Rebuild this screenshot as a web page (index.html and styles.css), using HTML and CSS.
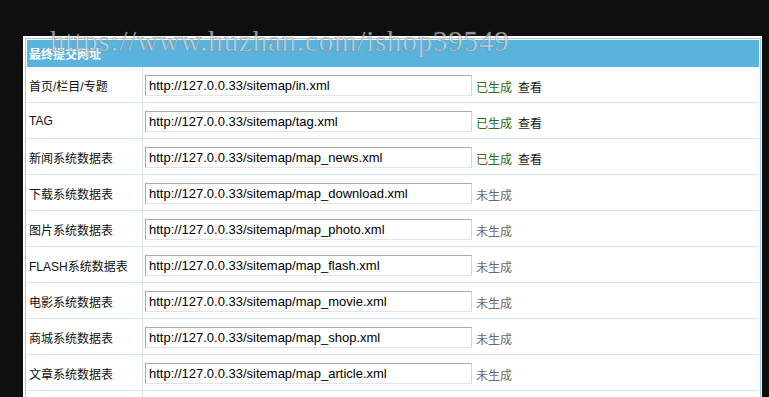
FILE: index.html
```html
<!DOCTYPE html>
<html lang="zh-CN">
<head>
    <meta charset="UTF-8">
    <title>Sitemap 提交网址</title>
    <link rel="stylesheet" href="styles.css">
</head>
<body>
    <div class="panel">
        <table class="sitemap">
            <tr>
                <th colspan="2">最终提交网址</th>
            </tr>
            <tr>
                <td class="label">首页/栏目/专题</td>
                <td><input type="text" value="http://127.0.0.33/sitemap/in.xml"><span class="done">已生成</span><a class="view" href="#">查看</a></td>
            </tr>
            <tr>
                <td class="label">TAG</td>
                <td><input type="text" value="http://127.0.0.33/sitemap/tag.xml"><span class="done">已生成</span><a class="view" href="#">查看</a></td>
            </tr>
            <tr>
                <td class="label">新闻系统数据表</td>
                <td><input type="text" value="http://127.0.0.33/sitemap/map_news.xml"><span class="done">已生成</span><a class="view" href="#">查看</a></td>
            </tr>
            <tr>
                <td class="label">下载系统数据表</td>
                <td><input type="text" value="http://127.0.0.33/sitemap/map_download.xml"><span class="todo">未生成</span></td>
            </tr>
            <tr>
                <td class="label">图片系统数据表</td>
                <td><input type="text" value="http://127.0.0.33/sitemap/map_photo.xml"><span class="todo">未生成</span></td>
            </tr>
            <tr>
                <td class="label">FLASH系统数据表</td>
                <td><input type="text" value="http://127.0.0.33/sitemap/map_flash.xml"><span class="todo">未生成</span></td>
            </tr>
            <tr>
                <td class="label">电影系统数据表</td>
                <td><input type="text" value="http://127.0.0.33/sitemap/map_movie.xml"><span class="todo">未生成</span></td>
            </tr>
            <tr>
                <td class="label">商城系统数据表</td>
                <td><input type="text" value="http://127.0.0.33/sitemap/map_shop.xml"><span class="todo">未生成</span></td>
            </tr>
            <tr>
                <td class="label">文章系统数据表</td>
                <td><input type="text" value="http://127.0.0.33/sitemap/map_article.xml"><span class="todo">未生成</span></td>
            </tr>
            <tr>
                <td class="label"></td>
                <td></td>
            </tr>
        </table>
    </div>

    <div class="watermark">https://www.huzhan.com/ishop39549</div>
</body>
</html>
```

FILE: styles.css
```css
:root {
    --head: #5ab3dd;
    --line: #d4e6ef;
    --frame: #9ccde6;
    --green: #2c6a1c;
}

body {
    margin: 0;
    padding: 36px 7px 0 23px;
    background: #0f0f0f;
    font-family: 'Liberation Sans', 'Noto Sans CJK SC', sans-serif;
    font-size: 12px;
    color: #111;
    overflow: hidden;
}

.panel {
    background: #fff;
    padding: 2px 1px 0 2px;
}

.sitemap {
    width: 100%;
    border: 1px solid var(--frame);
    border-bottom: none;
    border-spacing: 0;
    padding: 1px 1px 0 1px;
}

.sitemap th {
    height: 27px;
    padding: 0 0 0 2px;
    background: var(--head);
    color: #fff;
    font-weight: bold;
    text-align: left;
}

.sitemap td {
    height: 34px;
    padding: 1px 0 0 2px;
    border-bottom: 1px solid var(--line);
    white-space: nowrap;
}

.sitemap td.label {
    width: 113px;
    border-right: 1px solid var(--line);
}

.sitemap input {
    box-sizing: border-box;
    width: 327px;
    height: 21px;
    margin: 0;
    padding: 0 3px;
    border: 1px solid;
    border-color: #aaa #d6d6d6 #e4e4e4 #aaa;
    font-family: 'Liberation Sans', sans-serif;
    font-size: 13px;
    color: #000;
    vertical-align: middle;
}

.done,
.todo {
    display: inline-block;
    margin: 3px 0 0 4px;
    vertical-align: middle;
}

.done {
    color: var(--green);
}

.todo {
    color: #6a6a6a;
}

.view {
    display: inline-block;
    margin: 3px 0 0 6px;
    color: #1a1a1a;
    text-decoration: none;
    vertical-align: middle;
}

/* site watermark laid over the header */
.watermark {
    position: absolute;
    top: 27px;
    left: 50px;
    font-family: 'Liberation Serif', serif;
    font-size: 29px;
    line-height: 1;
    letter-spacing: 0.8px;
    color: rgba(225, 225, 225, 0.68);
    -webkit-text-stroke: 0.6px rgba(110, 110, 110, 0.55);
    pointer-events: none;
}
```
